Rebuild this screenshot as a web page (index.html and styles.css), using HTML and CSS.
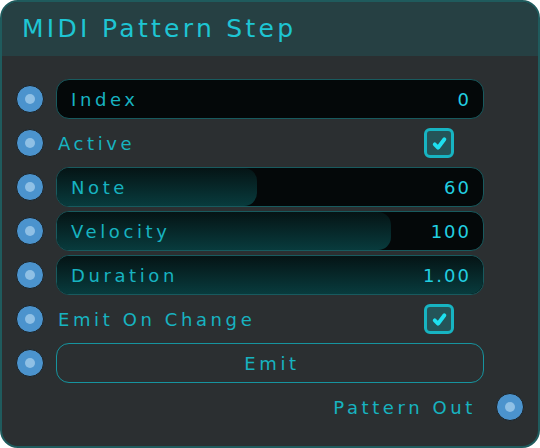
FILE: index.html
```html
<!DOCTYPE html>
<html>
<head>
<meta charset="utf-8">
<link rel="stylesheet" href="styles.css">
</head>
<body>
<div class="node">
  <div class="header"><span class="title">MIDI Pattern Step</span></div>
  <div class="rows">
    <div class="row">
      <span class="socket"></span>
      <div class="field"><span class="label">Index</span><span class="value">0</span></div>
      <span></span>
    </div>
    <div class="row">
      <span class="socket"></span>
      <div class="toggle"><span class="label">Active</span>
        <span class="check"><svg viewBox="0 0 16 16" width="17" height="17"><path d="M3.5 8.8 L6.6 12 L12.6 4" fill="none" stroke="#1ee0ef" stroke-width="3.6" stroke-linecap="round" stroke-linejoin="round"/></svg></span>
      </div>
      <span></span>
    </div>
    <div class="row">
      <span class="socket"></span>
      <div class="field"><span class="fill" style="width:47%"></span><span class="label">Note</span><span class="value">60</span></div>
      <span></span>
    </div>
    <div class="row">
      <span class="socket"></span>
      <div class="field"><span class="fill" style="width:78.5%"></span><span class="label">Velocity</span><span class="value">100</span></div>
      <span></span>
    </div>
    <div class="row">
      <span class="socket"></span>
      <div class="field"><span class="fill" style="width:100%"></span><span class="label">Duration</span><span class="value">1.00</span></div>
      <span></span>
    </div>
    <div class="row">
      <span class="socket"></span>
      <div class="toggle"><span class="label">Emit On Change</span>
        <span class="check"><svg viewBox="0 0 16 16" width="17" height="17"><path d="M3.5 8.8 L6.6 12 L12.6 4" fill="none" stroke="#1ee0ef" stroke-width="3.6" stroke-linecap="round" stroke-linejoin="round"/></svg></span>
      </div>
      <span></span>
    </div>
    <div class="row">
      <span class="socket"></span>
      <div class="button"><span class="label">Emit</span></div>
      <span></span>
    </div>
    <div class="row">
      <span></span>
      <div class="output"><span class="label">Pattern Out</span></div>
      <span class="socket"></span>
    </div>
  </div>
</div>
</body>
</html>
```

FILE: styles.css
```css
html, body {
  margin: 0;
  padding: 0;
  background: #ffffff;
}
.node {
  width: 540px;
  height: 448px;
  box-sizing: border-box;
  border: 2px solid #1f5b5d;
  border-radius: 18px;
  background: #2b2f31;
  overflow: hidden;
  font-family: "DejaVu Sans", sans-serif;
}
.header {
  height: 54px;
  background: #264043;
  display: flex;
  align-items: center;
  padding-left: 20px;
}
.title {
  color: #1ec5d3;
  font-size: 25px;
  letter-spacing: 3.3px;
  margin-top: -2px;
}
.rows {
  padding: 23px 14px 0 14px;
  display: flex;
  flex-direction: column;
  gap: 4px;
}
.row {
  display: grid;
  grid-template-columns: 28px 1fr 28px;
  column-gap: 12px;
  align-items: center;
  height: 40px;
}
.socket {
  width: 28px;
  height: 28px;
  box-sizing: border-box;
  border-radius: 50%;
  background: #4b93cd;
  border: 1.5px solid #1b2124;
  display: flex;
  align-items: center;
  justify-content: center;
}
.socket::after {
  content: "";
  width: 10px;
  height: 10px;
  border-radius: 50%;
  background: #8fc0e5;
}
.field {
  position: relative;
  height: 40px;
  box-sizing: border-box;
  border: 1px solid #185a5e;
  border-radius: 13px;
  background: #040809;
  display: flex;
  align-items: center;
  justify-content: space-between;
  padding: 0 12px 0 14px;
  overflow: hidden;
}
.fill {
  position: absolute;
  left: 0;
  top: 0;
  bottom: 0;
  border-radius: 0 13px 13px 0;
  background: linear-gradient(#051415, #083b3d);
}
.label {
  position: relative;
  color: #17b3c0;
  font-size: 18px;
  letter-spacing: 3.6px;
}
.value {
  position: relative;
  color: #22cfe0;
  font-size: 18px;
  letter-spacing: 2px;
}
.toggle {
  height: 40px;
  display: flex;
  align-items: center;
  justify-content: space-between;
  padding: 0 30px 0 2px;
}
.check {
  width: 30px;
  height: 30px;
  box-sizing: border-box;
  border: 3px solid #17b4c2;
  border-radius: 6px;
  background: #245458;
  display: flex;
  align-items: center;
  justify-content: center;
}
.button {
  height: 40px;
  box-sizing: border-box;
  border: 1px solid #16949f;
  border-radius: 13px;
  display: flex;
  align-items: center;
  justify-content: center;
  padding-left: 4px;
}
.output {
  display: flex;
  justify-content: flex-end;
  padding-right: 8px;
}
```
